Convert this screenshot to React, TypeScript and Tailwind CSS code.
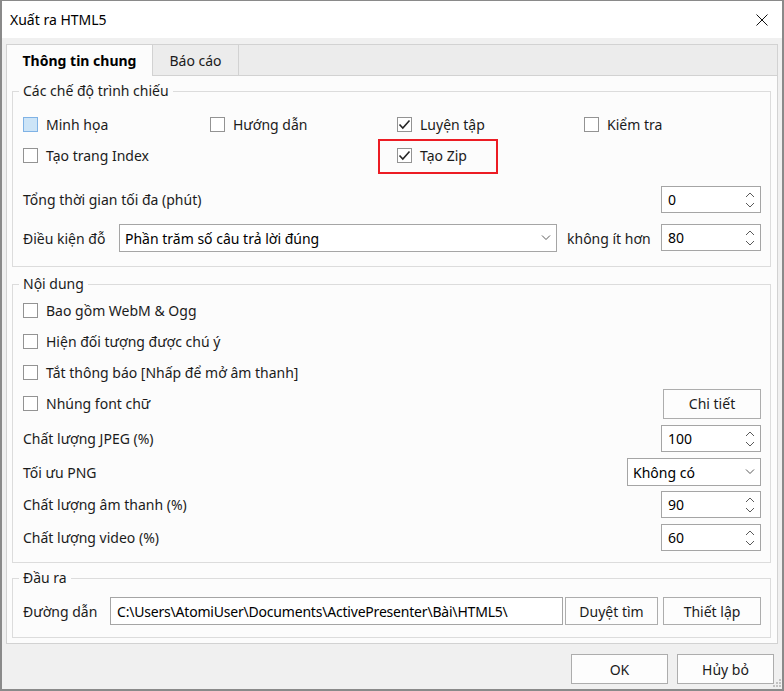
import React from "react";

const Chk = ({ checked = false, hover = false }: { checked?: boolean; hover?: boolean }) => (
  <div
    className={`w-[15px] h-[15px] shrink-0 border flex items-center justify-center ${
      hover ? "border-[#7fb2e5] bg-[#cce4f7]" : "border-[#939393] bg-white"
    }`}
  >
    {checked && (
      <svg width="13" height="13" viewBox="0 0 13 13">
        <polyline points="1.5,6.5 4.8,10 11.5,2.5" fill="none" stroke="#262626" strokeWidth="1.6" />
      </svg>
    )}
  </div>
);

const CheckItem = ({ label, checked, hover }: { label: string; checked?: boolean; hover?: boolean }) => (
  <div className="flex items-center gap-[8px] h-full">
    <Chk checked={checked} hover={hover} />
    <span className="whitespace-nowrap">{label}</span>
  </div>
);

const Spin = ({ value }: { value: string }) => (
  <div className="w-[100px] h-[27px] border border-[#a5a5a5] bg-white flex items-center pl-[6px] pr-[5px] shrink-0">
    <span className="flex-1 text-black">{value}</span>
    <svg width="10" height="25" viewBox="0 0 10 25">
      <polyline points="1,10 5,6 9,10" fill="none" stroke="#5a5a5a" strokeWidth="1" />
      <polyline points="1,16 5,20 9,16" fill="none" stroke="#5a5a5a" strokeWidth="1" />
    </svg>
  </div>
);

const Combo = ({ value, w }: { value: string; w: string }) => (
  <div className={`${w} h-[28px] border border-[#a5a5a5] bg-white flex items-center pl-[5px] pr-[5px] shrink-0`}>
    <span className="flex-1 whitespace-nowrap text-black">{value}</span>
    <svg width="10" height="6" viewBox="0 0 10 6">
      <polyline points="1,0.5 5,4.5 9,0.5" fill="none" stroke="#5a5a5a" strokeWidth="1" />
    </svg>
  </div>
);

const Btn = ({ label, w, h = "h-[30px]" }: { label: string; w: string; h?: string }) => (
  <div className={`${w} ${h} border border-[#adadad] bg-[#fdfdfd] flex items-center justify-center shrink-0 whitespace-nowrap`}>
    {label}
  </div>
);

const Legend = ({ text }: { text: string }) => (
  <div className="-mt-[11px] -ml-[4px] px-[4px] w-fit h-[20px] leading-[20px] bg-[#fcfcfc]">{text}</div>
);

export default function App() {
  return (
    <div className="relative w-[784px] h-[691px] bg-[#f0f0f0] border-x-2 border-b-2 border-t border-[#8a8a8a] flex flex-col text-[14px] text-[#1b1b1b] font-['Noto_Sans',sans-serif] overflow-hidden">
      {/* Title bar */}
      <div className="h-[37px] bg-white flex items-center pl-[8px] pr-[14px] shrink-0">
        <span className="text-black">Xuất ra HTML5</span>
        <svg className="ml-auto" width="12" height="12" viewBox="0 0 12 12">
          <line x1="0.5" y1="0.5" x2="11.5" y2="11.5" stroke="#111" strokeWidth="1" />
          <line x1="11.5" y1="0.5" x2="0.5" y2="11.5" stroke="#111" strokeWidth="1" />
        </svg>
      </div>

      {/* Body */}
      <div className="flex-1 flex flex-col px-[4px] pt-[6px]">
        <div className="border border-[#d2d2d2] flex flex-col">
          {/* Tab strip */}
          <div className="flex h-[31px] bg-[#ececec] border-b border-[#d2d2d2]">
            <div className="w-[146px] h-[31px] bg-[#fcfcfc] border-r border-[#d2d2d2] flex items-center justify-center font-bold text-black">
              Thông tin chung
            </div>
            <div className="w-[86px] h-full border-r border-[#d2d2d2] flex items-center justify-center">
              Báo cáo
            </div>
          </div>

          {/* Panel */}
          <div className="bg-[#fcfcfc] pl-[5px] pr-[6px] pt-[15px] pb-[5px] flex flex-col">
            {/* Group 1 */}
            <div className="border border-[#dcdcdc] pl-[10px] pr-[9px] pb-[14px] flex flex-col">
              <Legend text="Các chế độ trình chiếu" />
              <div className="flex h-[31px] mt-[8px]">
                <div className="w-[187px] shrink-0"><CheckItem label="Minh họa" hover /></div>
                <div className="w-[187px] shrink-0"><CheckItem label="Hướng dẫn" /></div>
                <div className="w-[187px] shrink-0"><CheckItem label="Luyện tập" checked /></div>
                <div className="flex-1"><CheckItem label="Kiểm tra" /></div>
              </div>
              <div className="flex h-[31px]">
                <div className="w-[374px] shrink-0"><CheckItem label="Tạo trang Index" /></div>
                <div className="relative w-[187px] shrink-0">
                  <CheckItem label="Tạo Zip" checked />
                  <div className="absolute left-[-19px] top-[-1px] w-[120px] h-[35px] border-2 border-[#ec1c24]" />
                </div>
              </div>
              <div className="flex items-center justify-between h-[27px] mt-[15px]">
                <span>Tổng thời gian tối đa (phút)</span>
                <Spin value="0" />
              </div>
              <div className="flex items-center h-[28px] mt-[11px]">
                <span className="w-[96px] shrink-0 whitespace-nowrap">Điều kiện đỗ</span>
                <Combo value="Phần trăm số câu trả lời đúng" w="w-[438px]" />
                <span className="ml-[10px] whitespace-nowrap">không ít hơn</span>
                <div className="ml-auto self-start"><Spin value="80" /></div>
              </div>
            </div>

            {/* Group 2 */}
            <div className="border border-[#dcdcdc] pl-[10px] pr-[9px] pb-[11px] mt-[17px] flex flex-col">
              <Legend text="Nội dung" />
              <div className="h-[31px] mt-[1px]"><CheckItem label="Bao gồm WebM & Ogg" /></div>
              <div className="h-[31px]"><CheckItem label="Hiện đối tượng được chú ý" /></div>
              <div className="h-[31px]"><CheckItem label="Tắt thông báo [Nhấp để mở âm thanh]" /></div>
              <div className="h-[31px] flex items-center justify-between">
                <CheckItem label="Nhúng font chữ" />
                <Btn label="Chi tiết" w="w-[98px]" />
              </div>
              <div className="flex items-center justify-between h-[27px] mt-[6px]">
                <span>Chất lượng JPEG (%)</span>
                <Spin value="100" />
              </div>
              <div className="flex items-center justify-between h-[28px] mt-[6px]">
                <span>Tối ưu PNG</span>
                <Combo value="Không có" w="w-[134px]" />
              </div>
              <div className="flex items-center justify-between h-[27px] mt-[5px]">
                <span>Chất lượng âm thanh (%)</span>
                <Spin value="90" />
              </div>
              <div className="flex items-center justify-between h-[27px] mt-[6px]">
                <span>Chất lượng video (%)</span>
                <Spin value="60" />
              </div>
            </div>

            {/* Group 3 */}
            <div className="border border-[#dcdcdc] pl-[10px] pr-[9px] pb-[12px] mt-[15px] flex flex-col">
              <Legend text="Đầu ra" />
              <div className="flex items-center h-[28px] mt-[9px]">
                <span className="w-[87px] shrink-0 whitespace-nowrap">Đường dẫn</span>
                <div className="w-[453px] h-[28px] border border-[#a5a5a5] bg-white flex items-center pl-[6px] shrink-0 whitespace-nowrap overflow-hidden text-black tracking-[-0.2px]">
                  C:\Users\AtomiUser\Documents\ActivePresenter\Bài\HTML5\
                </div>
                <div className="ml-[2px]"><Btn label="Duyệt tìm" w="w-[93px]" h="h-[28px]" /></div>
                <div className="ml-[5px]"><Btn label="Thiết lập" w="w-[98px]" h="h-[28px]" /></div>
              </div>
            </div>
          </div>
        </div>

        {/* Bottom buttons */}
        <div className="flex justify-end gap-[9px] mt-[10px] pr-[4px]">
          <Btn label="OK" w="w-[97px]" />
          <Btn label="Hủy bỏ" w="w-[97px]" />
        </div>
      </div>

      {/* Size grip */}
      <svg className="absolute right-0 bottom-[1px]" width="10" height="10" viewBox="0 0 10 10">
        <rect x="7" y="1" width="2" height="2" fill="#c2c2c2" />
        <rect x="4" y="4" width="2" height="2" fill="#c2c2c2" />
        <rect x="7" y="4" width="2" height="2" fill="#c2c2c2" />
        <rect x="1" y="7" width="2" height="2" fill="#c2c2c2" />
        <rect x="4" y="7" width="2" height="2" fill="#c2c2c2" />
        <rect x="7" y="7" width="2" height="2" fill="#c2c2c2" />
      </svg>
    </div>
  );
}
